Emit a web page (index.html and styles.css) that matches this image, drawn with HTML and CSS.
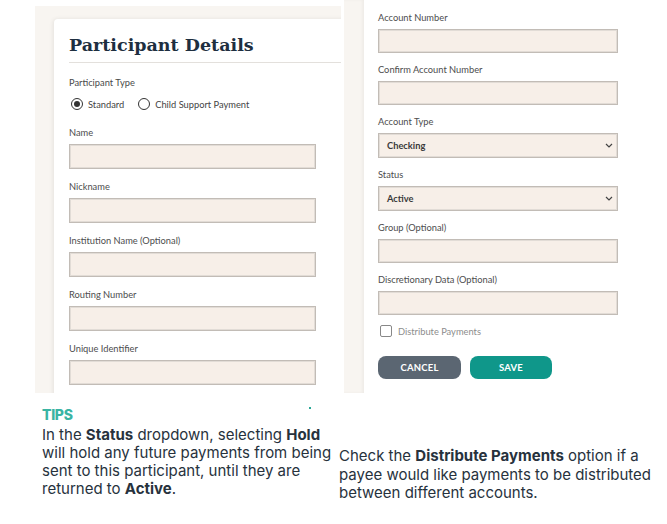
FILE: index.html
```html
<!DOCTYPE html>
<html>
<head>
<meta charset="utf-8">
<link rel="stylesheet" href="styles.css">
</head>
<body>
<div class="page">
  <div class="shots">
    <div class="left-shot">
      <div class="card">
        <h1 class="title">Participant Details</h1>
        <div class="rule"></div>
        <div class="type-label">Participant Type</div>
        <div class="radios">
          <span class="radio checked"></span><span class="radio-text">Standard</span>
          <span class="radio"></span><span class="radio-text">Child Support Payment</span>
        </div>
        <div class="field l"><div class="label">Name</div><div class="input"></div></div>
        <div class="field l"><div class="label">Nickname</div><div class="input"></div></div>
        <div class="field l"><div class="label">Institution Name (Optional)</div><div class="input"></div></div>
        <div class="field l"><div class="label">Routing Number</div><div class="input"></div></div>
        <div class="field l"><div class="label">Unique Identifier</div><div class="input"></div></div>
      </div>
    </div>
    <div class="right-shot">
      <div class="strip"></div>
      <div class="right-body">
        <div class="field r"><div class="label">Account Number</div><div class="input"></div></div>
        <div class="field r"><div class="label">Confirm Account Number</div><div class="input"></div></div>
        <div class="field r"><div class="label">Account Type</div><div class="input select"><span>Checking</span><svg class="chev" viewBox="0 0 8 5" width="8" height="5"><path d="M1 1 L4 4 L7 1" fill="none" stroke="#444" stroke-width="1.2"/></svg></div></div>
        <div class="field r"><div class="label">Status</div><div class="input select"><span>Active</span><svg class="chev" viewBox="0 0 8 5" width="8" height="5"><path d="M1 1 L4 4 L7 1" fill="none" stroke="#444" stroke-width="1.2"/></svg></div></div>
        <div class="field r"><div class="label">Group (Optional)</div><div class="input"></div></div>
        <div class="field r"><div class="label">Discretionary Data (Optional)</div><div class="input"></div></div>
        <div class="check-row"><span class="checkbox"></span><span class="check-text">Distribute Payments</span></div>
        <div class="buttons">
          <div class="btn cancel">CANCEL</div>
          <div class="btn save">SAVE</div>
        </div>
      </div>
    </div>
  </div>
  <div class="tips">
    <div class="tip-left">
      <div class="tips-head">TIPS<span class="dot"></span></div>
      <p>In the <b>Status</b> dropdown, selecting <b>Hold</b> will hold any future payments from being sent to this participant, until they are returned to <b>Active</b>.</p>
    </div>
    <div class="tip-right">
      <p>Check the <b>Distribute Payments</b> option if a payee would like payments to be distributed between different accounts.</p>
    </div>
  </div>
</div>
</body>
</html>
```
FILE: styles.css
```css
html, body { margin: 0; padding: 0; background: #fff; }
.page { width: 667px; height: 524px; position: relative; overflow: hidden; font-family: "Lato", "Liberation Sans", sans-serif; }
.shots { display: flex; align-items: flex-start; height: 393px; }
.left-shot {
  margin-left: 35px; margin-top: 6px; width: 306px; height: 387px; flex-shrink: 0;
  background: #f8f5f1; overflow: hidden; padding: 13px 0 0 19px; box-sizing: border-box;
}
.card {
  background: #fff; width: 320px; height: 400px; border-radius: 4px 0 0 0;
  box-shadow: -1px 0 4px rgba(0,0,0,0.08); padding: 0 0 0 15px; box-sizing: border-box;
}
.title {
  margin: 0; padding-top: 13px; font-family: "DejaVu Serif", "Liberation Serif", serif;
  font-weight: bold; font-size: 17.5px; line-height: 26px; color: #1e2f40;
}
.rule { height: 1px; background: #e3e0dc; margin-top: 4px; }
.type-label { font-size: 9.3px; color: #4a4a4a; margin-top: 14px; line-height: 12px; }
.radios { display: flex; align-items: center; margin-top: 8px; height: 14px; font-size: 9.3px; color: #444; }
.radio { width: 10px; height: 10px; border: 1.3px solid #333; border-radius: 50%; margin-left: 2px; margin-right: 5px; position: relative; }
.radio.checked::after { content: ""; position: absolute; left: 2px; top: 2px; width: 6px; height: 6px; border-radius: 50%; background: #333; }
.radio-text { margin-right: 12px; }
.field { display: flex; flex-direction: column; }
.field.l { margin-top: 16px; }
.field.l + .field.l { margin-top: 12px; }
.label { font-size: 9.3px; color: #4d4d4d; line-height: 12px; height: 12px; }
.input {
  margin-top: 5px; height: 25px; box-sizing: border-box; background: #f7efe8;
  border: 1px solid #c2bcb6; box-shadow: inset 0 0 0 1px #e2dcd6;
}
.field.l .input { width: 247px; }
.right-shot { display: flex; width: 323px; height: 393px; margin-left: 3px; flex-shrink: 0; }
.strip { width: 20px; background: #f8f5f1; box-shadow: inset -2px 0 3px rgba(0,0,0,0.04); }
.right-body { flex: 1; padding: 12px 0 0 14px; }
.field.r + .field.r { margin-top: 11px; }
.field.r .input { width: 240px; height: 24px; }
.field.r .select { height: 25px; }
.select { display: flex; align-items: center; justify-content: space-between; padding: 0 4px 0 8px; font-size: 9.3px; color: #333; }
.select span { font-weight: 700; color: #3a3a3a; }
.chev { margin-top: -1px; }
.check-row { display: flex; align-items: center; margin-top: 10px; height: 12px; }
.checkbox { width: 10px; height: 10px; border: 1.2px solid #888; border-radius: 2px; margin-left: 2px; margin-right: 6px; }
.check-text { font-size: 9.3px; color: #8d8d8d; }
.buttons { display: flex; gap: 9px; margin-top: 19px; }
.btn { width: 83px; height: 23px; border-radius: 8px; color: #fff; font-size: 9.5px; font-weight: bold; display: flex; align-items: center; justify-content: center; letter-spacing: 0.2px; }
.cancel { background: #5b6672; }
.save { background: #0f978a; width: 82px; }
.tips { display: flex; padding: 14px 0 0 42px; font-family: "Inter", "Liberation Sans", sans-serif; color: #27323d; }
.tip-left { width: 297px; flex-shrink: 0; }
.tip-left p { width: 292px; }
.tips-head { font-weight: 800; color: #3ab4a3; font-size: 14px; line-height: 16px; position: relative; letter-spacing: -0.3px; }
.dot { position: absolute; left: 267px; top: 0; width: 2px; height: 2px; background: #2aa796; }
.tips p { margin: 3px 0 0 0; font-size: 15px; line-height: 18px; }
.tip-right { padding-top: 40px; width: 325px; flex-shrink: 0; }
.tip-right p { margin: 0; line-height: 18.5px; }
b { font-weight: 700; }
```
